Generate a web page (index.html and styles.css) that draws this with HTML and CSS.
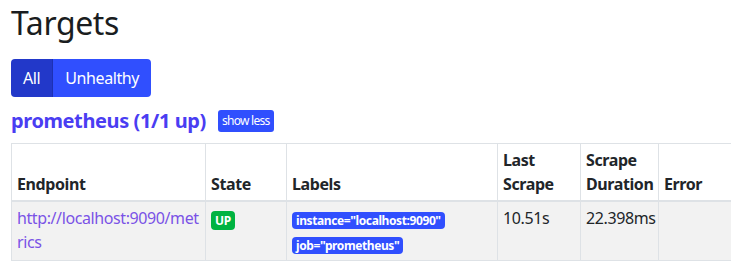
FILE: index.html
```html
<!DOCTYPE html>
<html lang="en">
<head>
  <meta charset="UTF-8">
  <meta name="viewport" content="width=device-width, initial-scale=1.0">
  <title>Targets</title>
  <link rel="stylesheet" href="styles.css">
</head>
<body>
  <main class="page">
    <h1>Targets</h1>

    <div class="btn-group">
      <button class="btn active">All</button>
      <button class="btn">Unhealthy</button>
    </div>

    <div class="pool-header">
      <a class="pool-name" href="#">prometheus (1/1 up)</a>
      <button class="btn-small">show less</button>
    </div>

    <table class="targets">
      <colgroup>
        <col style="width: 194px">
        <col style="width: 81px">
        <col style="width: 211px">
        <col style="width: 83px">
        <col style="width: 78px">
        <col style="width: 110px">
      </colgroup>
      <thead>
        <tr>
          <th>Endpoint</th>
          <th>State</th>
          <th>Labels</th>
          <th>Last Scrape</th>
          <th>Scrape Duration</th>
          <th>Error</th>
        </tr>
      </thead>
      <tbody>
        <tr>
          <td class="endpoint"><a href="#">http://localhost:9090/metrics</a></td>
          <td><span class="badge up">UP</span></td>
          <td>
            <span class="badge label">instance="localhost:9090"</span>
            <span class="badge label">job="prometheus"</span>
          </td>
          <td>10.51s</td>
          <td>22.398ms</td>
          <td></td>
        </tr>
      </tbody>
    </table>
  </main>
</body>
</html>
```

FILE: styles.css
```css
body {
  margin: 0;
  font-family: "Noto Sans", "Open Sans", sans-serif;
  font-size: 16px;
  line-height: 1.5;
  letter-spacing: -0.025em;
  color: #212529;
  background: #fff;
  overflow: hidden;
}

.page {
  padding: 0 11px;
}

h1 {
  font-size: 32px;
  font-weight: 400;
  line-height: 1.2;
  margin: 4px 0 17px;
  color: #1a1d20;
}

.btn-group {
  display: inline-flex;
  border-radius: 4px;
  overflow: hidden;
}

.btn {
  font-family: inherit;
  font-size: 16px;
  line-height: 24px;
  letter-spacing: inherit;
  color: #fff;
  background: #304ffe;
  border: none;
  padding: 7px 12px;
  cursor: pointer;
}

.btn.active {
  background: #2238c9;
  border-right: 1px solid #1d31b3;
}

.pool-header {
  display: flex;
  align-items: center;
  gap: 12px;
  margin: 9px 0 7px;
}

.pool-name {
  font-size: 20px;
  font-weight: 700;
  color: #4a3df2;
  text-decoration: none;
}

.btn-small {
  font-family: inherit;
  font-size: 12px;
  line-height: 18px;
  height: 22px;
  letter-spacing: -0.06em;
  color: #fff;
  background: #304ffe;
  border: none;
  border-radius: 3px;
  padding: 2px 4px;
  cursor: pointer;
}

.targets {
  table-layout: fixed;
  width: 757px;
  border-collapse: collapse;
}

.targets th,
.targets td {
  border: 1px solid #dee2e6;
  padding: 4px 5px;
  text-align: left;
  vertical-align: top;
}

.targets th {
  vertical-align: bottom;
  border-bottom: 2px solid #dee2e6;
}

.targets tbody tr {
  background: #f2f2f2;
}

.endpoint {
  word-break: break-all;
}

.endpoint a {
  color: #7a52e6;
  text-decoration: none;
}

.badge {
  display: inline-block;
  font-size: 12px;
  font-weight: 700;
  line-height: 12px;
  color: #fff;
  border-radius: 4px;
  padding: 3px 4px;
}

.badge.up {
  background: #00b341;
  padding: 3px 4px 3px;
  margin-top: 5px;
  line-height: 13px;
}

.badge.label {
  background: #304ffe;
  margin: 6px 0 1px;
  line-height: 12px;
  padding: 3px 4px 2px;
}
```
